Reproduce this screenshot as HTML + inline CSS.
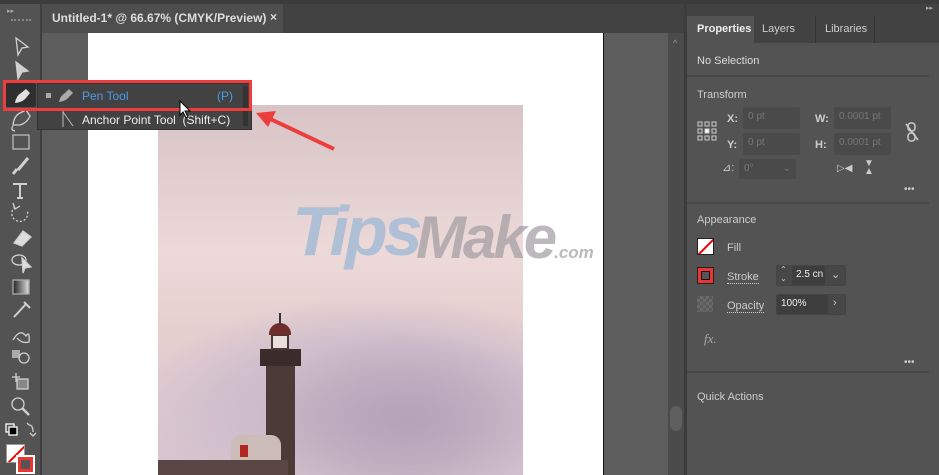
<!DOCTYPE html>
<html><head><meta charset="utf-8"><style>
*{margin:0;padding:0;box-sizing:border-box}
body{width:939px;height:475px;overflow:hidden;background:#535353;font-family:"Liberation Sans",sans-serif;position:relative;font-size:11px;color:#ddd}
.a{position:absolute}
.lbl{color:#ccc;font-size:11px}
.inp{background:#4a4a4a;border-radius:2px;color:#777;font-size:10px;padding:4px 5px;height:22px}
</style></head><body>
<div class="a" style="left:0;top:0;width:939px;height:4px;background:#3c3c3c"></div>
<div class="a" style="left:0;top:4px;width:40px;height:471px;background:#535353"></div>
<div class="a" style="left:40px;top:4px;width:2px;height:471px;background:#3e3e3e"></div>
<div class="a" style="left:7px;top:7px;color:#aaa;font-size:7px">▸▸</div>
<div class="a" style="left:11px;top:19px;width:20px;height:3px;border-top:2px dotted #888"></div>
<svg class="a" style="left:0;top:0" width="40" height="475" fill="none" stroke="#d0d0d0" stroke-width="1.3">
<path d="M16 38 L28 47 L22 48 L18 55 Z"/>
<path d="M16 62 L28 71 L22 72 L18 79 Z" fill="#d0d0d0"/>
<path d="M13 125 Q14 116 20 113 L26 110 L30 116 Q27 123 20 125 Z M13 126 Q10 130 15 131" />
<rect x="13" y="135" width="16" height="14" stroke="#bbb"/>
<path d="M28 158 L18 170 M13 174 L17 169" stroke-width="3"/>
<path d="M13 184 H27 M20 184 V198 M17 198 H23" stroke-width="2"/>
<path d="M15 207 A8 8 0 1 0 27 210" stroke-dasharray="2 2"/><path d="M13 203 L15 209 L20 206"/>
<path d="M14 243 L23 231 L31 237 L22 246 Z" fill="#ddd"/>
<ellipse cx="19" cy="260" rx="7" ry="5"/><path d="M22 258 L31 267 L25 268 L23 273 Z" fill="#ddd"/>
<rect x="13" y="280" width="16" height="14" fill="url(#g)" stroke="#aaa"/>
<defs><linearGradient id="g"><stop offset="0" stop-color="#222"/><stop offset="1" stop-color="#ddd"/></linearGradient></defs>
<path d="M14 317 L26 304 M24 302 L30 308" stroke-width="2"/>
<path d="M13 340 Q20 328 26 336 Q30 330 29 342 Q22 344 17 338"/>
<rect x="12" y="350" width="8" height="8" fill="#aaa" stroke="none"/><circle cx="24" cy="358" r="5"/>
<path d="M12 377 H20 M16 373 V382"/><rect x="17" y="379" width="11" height="10" fill="#888"/>
<circle cx="18" cy="404" r="6"/><path d="M22 408 L29 415" stroke-width="2.5"/>
<rect x="6" y="424" width="8" height="8" stroke="#fff"/><rect x="9" y="427" width="8" height="8" fill="#000" stroke="#fff"/>
<path d="M29 425 Q33 425 33 432 M30 433 L33 436 L36 433 M29 425 L27 423"/>
</svg>
<div class="a" style="left:6px;top:444px;width:19px;height:19px;background:#fff;border:1px solid #999;overflow:hidden"><div style="position:absolute;left:-5px;top:8px;width:30px;height:2px;background:#e00;transform:rotate(-45deg)"></div></div>
<div class="a" style="left:16px;top:455px;width:19px;height:19px;background:#fff;padding:2px"><div style="width:15px;height:15px;border:3px solid #e33;background:#555"></div></div>
<div class="a" style="left:42px;top:4px;width:642px;height:29px;background:#424242"></div>
<div class="a" style="left:42px;top:4px;width:241px;height:29px;background:#4e4e4e;color:#ddd;font-size:12px;font-weight:bold;padding:7px 0 0 10px">Untitled-1* @ 66.67% (CMYK/Preview)<span style="position:absolute;left:228px;top:6px">×</span></div>
<div class="a" style="left:42px;top:33px;width:626px;height:442px;background:#5d5d5d"></div>
<div class="a" style="left:88px;top:33px;width:516px;height:442px;background:#fff;border-right:1px solid #111"></div>
<div class="a" style="left:668px;top:33px;width:16px;height:442px;background:#4b4b4b"></div>
<div class="a" style="left:673px;top:38px;color:#999;font-size:9px">^</div>
<div class="a" style="left:670px;top:406px;width:12px;height:25px;background:#5f5f5f;border-radius:6px"></div>
<div class="a" style="left:158px;top:105px;width:365px;height:370px;background:linear-gradient(#d8c4c6,#ecd9d8 40%,#e6d0cf 60%,#d7c4cf);overflow:hidden">
 <div class="a" style="left:-30px;top:190px;width:420px;height:200px;background:radial-gradient(ellipse at 60% 60%,#c2b0c2 0%,#d0bfcc 45%,rgba(220,205,215,0) 70%)"></div>
 <div class="a" style="left:100px;top:225px;width:300px;height:150px;background:radial-gradient(ellipse at 50% 60%,#b4a3b8 0%,rgba(190,175,195,0) 70%)"></div>
 <div class="a" style="left:108px;top:260px;width:29px;height:110px;background:#4b3a36"></div>
 <div class="a" style="left:102px;top:244px;width:41px;height:17px;background:#3a2c2a"></div>
 <div class="a" style="left:113px;top:229px;width:18px;height:16px;background:#e8dede;border:2px solid #4a3634"></div>
 <div class="a" style="left:111px;top:218px;width:22px;height:12px;background:#6e2b2b;border-radius:11px 11px 0 0"></div>
 <div class="a" style="left:121px;top:208px;width:2px;height:11px;background:#333"></div>
 <div class="a" style="left:73px;top:330px;width:50px;height:30px;background:#cbbcb8;border-radius:10px 10px 0 0"></div>
 <div class="a" style="left:82px;top:340px;width:8px;height:12px;background:#b02424"></div>
 <div class="a" style="left:0;top:355px;width:130px;height:15px;background:#5a4644"></div>
</div>
<div class="a" style="left:292px;top:196px;font:italic bold 70px 'Liberation Sans',sans-serif;letter-spacing:-4px;color:#aebfd6;line-height:70px">Tips</div>
<div class="a" style="left:416px;top:208px;font:italic bold 60px 'Liberation Sans',sans-serif;letter-spacing:-3px;color:rgba(160,155,160,.7);line-height:60px">Make<span style="font-size:17px;letter-spacing:0">.com</span></div>
<div class="a" style="left:37px;top:83px;width:215px;height:47px;background:#424242;border:1px solid #333"></div>
<div class="a" style="left:6px;top:83px;width:30px;height:24px;background:#2f2f2f;border-radius:2px"></div>
<svg class="a" style="left:6px;top:83px" width="30" height="24" fill="#e0e0e0"><path d="M9 20 Q10 13 15 10 L20 6 L24 10 L20 15 Q17 19 9 20 Z"/></svg>
<div class="a" style="left:46px;top:93px;width:5px;height:5px;background:#aaa"></div>
<svg class="a" style="left:56px;top:86px" width="20" height="18" fill="#aaa"><path d="M3 16 Q4 10 9 7 L13 3 L17 7 L13 11 Q10 15 3 16Z"/></svg>
<div class="a" style="left:82px;top:89px;color:#4a9de8;font-size:12px">Pen Tool</div>
<div class="a" style="left:217px;top:89px;color:#4a9de8;font-size:12px">(P)</div>
<div class="a" style="left:243px;top:86px;width:5px;height:40px;background:#333"></div>
<svg class="a" style="left:60px;top:110px" width="14" height="18" stroke="#bbb" fill="none"><path d="M3 1 V17 M3 2 L13 16"/></svg>
<div class="a" style="left:82px;top:113px;color:#eee;font-size:12px">Anchor Point Tool &nbsp;(Shift+C)</div>
<div class="a" style="left:3px;top:80px;width:249px;height:31px;border:3px solid #ee3d3d"></div>
<svg class="a" style="left:250px;top:105px" width="90" height="50"><path d="M84 44 L14 11" stroke="#ee3d3d" stroke-width="4"/><path d="M6 8 L26 6 L18 22 Z" fill="#ee3d3d"/></svg>
<svg class="a" style="left:178px;top:100px" width="14" height="20"><path d="M2 1 L2 15 L5 12 L8 18 L10 17 L7 11 L12 11 Z" fill="#fff" stroke="#000"/></svg>
<div class="a" style="left:684px;top:4px;width:3px;height:471px;background:#3c3c3c"></div>
<div class="a" style="left:687px;top:4px;width:252px;height:12px;background:#424242;color:#aaa;font-size:7px;text-align:right;padding-right:6px">▸▸</div>
<div class="a" style="left:687px;top:16px;width:252px;height:27px;background:#424242"></div>
<div class="a" style="left:687px;top:16px;width:67px;height:28px;background:#535353;color:#eee;font-weight:bold;padding:7px 0 0 10px">Properties</div>
<div class="a" style="left:754px;top:16px;width:62px;height:27px;border-right:1px solid #333;color:#ccc;padding:7px 0 0 8px">Layers</div>
<div class="a" style="left:816px;top:16px;width:59px;height:27px;border-right:1px solid #333;color:#ccc;padding:7px 0 0 9px">Libraries</div>
<div class="a lbl" style="left:697px;top:55px;color:#ddd">No Selection</div>
<div class="a" style="left:687px;top:75px;width:242px;height:2px;background:#474747"></div>
<div class="a lbl" style="left:697px;top:89px">Transform</div>
<svg class="a" style="left:697px;top:121px" width="20" height="20" stroke="#ccc" fill="none"><rect x="1" y="1" width="4" height="4"/><rect x="8" y="1" width="4" height="4"/><rect x="15" y="1" width="4" height="4"/><rect x="1" y="8" width="4" height="4"/><rect x="8" y="8" width="4" height="4" fill="#fff"/><rect x="15" y="8" width="4" height="4"/><rect x="1" y="15" width="4" height="4"/><rect x="8" y="15" width="4" height="4"/><rect x="15" y="15" width="4" height="4"/></svg>
<div class="a lbl" style="left:727px;top:113px;font-weight:bold">X:</div>
<div class="a inp" style="left:743px;top:107px;width:57px">0 pt</div>
<div class="a lbl" style="left:815px;top:113px;font-weight:bold">W:</div>
<div class="a inp" style="left:834px;top:107px;width:57px">0.0001 pt</div>
<div class="a lbl" style="left:727px;top:139px;font-weight:bold">Y:</div>
<div class="a inp" style="left:743px;top:133px;width:57px">0 pt</div>
<div class="a lbl" style="left:815px;top:139px;font-weight:bold">H:</div>
<div class="a inp" style="left:834px;top:133px;width:57px">0.0001 pt</div>
<svg class="a" style="left:905px;top:122px" width="14" height="20" stroke="#ccc" fill="none" stroke-width="1.5"><rect x="3" y="1" width="7" height="8" rx="3"/><rect x="3" y="11" width="7" height="8" rx="3"/><path d="M1 2 L13 18"/></svg>
<div class="a lbl" style="left:722px;top:161px">⊿:</div>
<div class="a inp" style="left:739px;top:159px;width:57px;height:20px">0° <span style="float:right">⌄</span></div>
<div class="a lbl" style="left:837px;top:163px;font-size:10px">▷◀</div>
<div class="a lbl" style="left:864px;top:160px;font-size:10px;line-height:8px">▼<br>▲</div>
<div class="a" style="left:904px;top:184px;color:#ccc;font-size:10px">•••</div>
<div class="a" style="left:687px;top:202px;width:242px;height:2px;background:#474747"></div>
<div class="a lbl" style="left:697px;top:214px">Appearance</div>
<div class="a" style="left:697px;top:238px;width:17px;height:17px;background:#fff;border:1px solid #222;overflow:hidden"><div style="position:absolute;left:-4px;top:7px;width:24px;height:2px;background:#e00;transform:rotate(-45deg)"></div></div>
<div class="a lbl" style="left:727px;top:242px">Fill</div>
<div class="a" style="left:697px;top:267px;width:17px;height:17px;background:#e33;border:1px solid #222;padding:3px"><div style="width:9px;height:9px;background:#555;border:1px solid #111"></div></div>
<div class="a lbl" style="left:727px;top:271px;border-bottom:1px dotted #ccc">Stroke</div>
<div class="a" style="left:776px;top:265px;width:70px;height:21px;background:#474747;border:1px solid #444;border-radius:2px"></div>
<div class="a" style="left:792px;top:266px;width:33px;height:19px;background:#3e3e3e;color:#eee;font-size:10px;padding:3px 0 0 4px">2.5 cn</div>
<div class="a lbl" style="left:780px;top:265px;font-size:8px;line-height:9px">⌃<br>⌄</div>
<div class="a lbl" style="left:831px;top:268px">⌄</div>
<div class="a" style="left:697px;top:296px;width:16px;height:16px;background:repeating-conic-gradient(#6a6a6a 0 25%,#5a5a5a 0 50%) 0 0/6px 6px"></div>
<div class="a lbl" style="left:727px;top:300px;border-bottom:1px dotted #ccc">Opacity</div>
<div class="a" style="left:776px;top:294px;width:70px;height:21px;background:#474747;border:1px solid #444;border-radius:2px"></div>
<div class="a" style="left:777px;top:295px;width:51px;height:19px;background:#3e3e3e;color:#eee;font-size:10px;padding:3px 0 0 4px">100%</div>
<div class="a lbl" style="left:833px;top:297px">›</div>
<div class="a" style="left:704px;top:331px;color:#aaa;font:italic 13px 'Liberation Serif',serif">fx.</div>
<div class="a" style="left:904px;top:357px;color:#ccc;font-size:10px">•••</div>
<div class="a" style="left:687px;top:371px;width:242px;height:2px;background:#474747"></div>
<div class="a lbl" style="left:697px;top:391px">Quick Actions</div>
</body></html>
